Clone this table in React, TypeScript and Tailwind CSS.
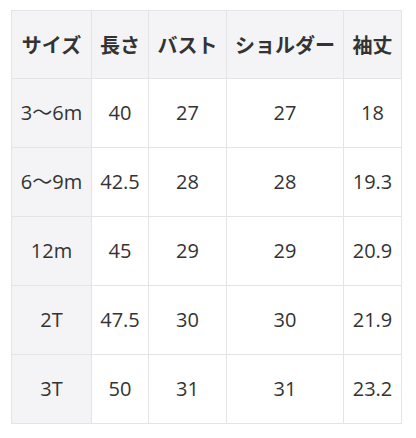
import React from 'react';

const rows = [
  ['3〜6m', '40', '27', '27', '18'],
  ['6〜9m', '42.5', '28', '28', '19.3'],
  ['12m', '45', '29', '29', '20.9'],
  ['2T', '47.5', '30', '30', '21.9'],
  ['3T', '50', '31', '31', '23.2'],
];

const headers = ['サイズ', '長さ', 'バスト', 'ショルダー', '袖丈'];
const widths = ['w-[80px]', 'w-[57px]', 'w-[78px]', 'w-[117px]', 'w-[58px]'];

export default function App() {
  return (
    <div className="min-h-[438px] w-[416px] bg-white pl-[11px] pt-[10px]">
      <table
        className="w-[391px] table-fixed border-collapse text-[20px] text-[#333]"
        style={{ fontFamily: '"Open Sans", "Noto Sans CJK JP", sans-serif' }}
      >
        <colgroup>
          {widths.map((w, i) => (
            <col key={i} className={w} />
          ))}
        </colgroup>
        <thead>
          <tr className="h-[68px] bg-[#f4f4f6]">
            {headers.map((h) => (
              <th
                key={h}
                className="border border-[#e4e4e7] p-0 text-center font-bold"
                style={{ fontFamily: '"Noto Sans CJK JP", sans-serif' }}
              >
                {h}
              </th>
            ))}
          </tr>
        </thead>
        <tbody>
          {rows.map((r) => (
            <tr key={r[0]} className="h-[69px]">
              {r.map((c, i) => (
                <td
                  key={i}
                  className={
                    'border border-[#e4e4e7] p-0 text-center ' +
                    (i === 0 ? 'bg-[#f4f4f6]' : 'bg-white')
                  }
                >
                  {c}
                </td>
              ))}
            </tr>
          ))}
        </tbody>
      </table>
    </div>
  );
}
